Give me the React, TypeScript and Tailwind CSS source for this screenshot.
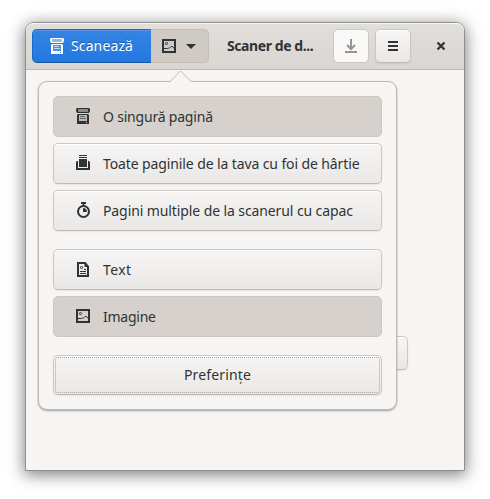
import React from "react";

type IconProps = { className?: string };

function PageIcon({ className = "" }: IconProps) {
  return (
    <svg className={`size-4 shrink-0 ${className}`} viewBox="0 0 16 16" fill="currentColor">
      <path fillRule="evenodd" d="M2 0h12l1 1v2l-1 2H2L1 3V1zM3 1v2l1 1h8l1-1V1z" />
      <path d="M3 1h10v2l-1 1H4L3 3z" opacity=".45" />
      <path fillRule="evenodd" d="M3 6h10l1 1v9H2V7zM4 7v6h8V7zM11 14v1h1v-1z" />
      <path d="M5 8h5v1H5zM5 10h6v1H5z" opacity=".65" />
      <path d="M4 7h8v6H4z" opacity=".15" />
    </svg>
  );
}

function TrayIcon() {
  return (
    <svg className="size-4 shrink-0" viewBox="0 0 16 16" fill="currentColor">
      <path d="M4 0h8v1H4zM4 2h8v1H4zM4 4h8v8H4z" />
      <path d="M2 6h1v7h10V6h1l1 1v8H1V7z" />
    </svg>
  );
}

function TimerIcon() {
  return (
    <svg className="size-4 shrink-0" viewBox="0 0 16 16" fill="none" stroke="currentColor">
      <circle cx="8.500" cy="9.500" r="5.500" strokeWidth="2" />
      <path d="M6 1h5M8.500 1v3" strokeWidth="1.800" />
      <path d="M8 6v4h4c0-2.500-1.500-4-4-4z" fill="currentColor" stroke="none" />
    </svg>
  );
}

function TextIcon() {
  return (
    <svg className="size-4 shrink-0" viewBox="0 0 16 16" fill="none" stroke="currentColor">
      <path d="M3 2h7l3 3.500V15H3z" strokeWidth="2" />
      <path d="M9.500 1.500V6H14L10 1z" fill="currentColor" stroke="none" />
      <circle cx="6.500" cy="6.500" r="1.100" />
      <path d="M9 8.500h2M5 10.500h6M5 12.500h6" />
    </svg>
  );
}

function ImageIcon() {
  return (
    <svg className="size-4 shrink-0" viewBox="0 0 16 16" fill="none" stroke="currentColor">
      <path d="M2 2h12v12H2z" strokeWidth="2" />
      <circle cx="5.500" cy="5.500" r="1.100" />
      <path d="M3 10.500h3.500l.8-.7.7.7 2-2h1.500L13 10.500" />
    </svg>
  );
}

const raised =
  "border border-[#cdc7c2] border-b-[#bfb8b1] bg-linear-to-b from-[#f6f5f3] to-[#eae8e6] shadow-[inset_0_1px_#fff,0_1px_2px_rgba(0,0,0,0.07)]";
const pressed = "border border-[#cdc7c2] bg-[#d6d1cc]";

function MenuButton({
  icon,
  label,
  active = false,
  spacing,
}: {
  icon: React.ReactNode;
  label: string;
  active?: boolean;
  spacing: string;
}) {
  return (
    <button className={`flex h-[41px] w-full items-center gap-3 rounded-[5px] pl-[21px] ${active ? pressed : raised}`}>
      <span className="-mt-px block size-4 shrink-0">{icon}</span>
      <span className={`whitespace-nowrap ${spacing}`}>{label}</span>
    </button>
  );
}

export default function App() {
  return (
    <div className="h-[499px] w-[490px] overflow-hidden bg-white pt-[22px] pl-[25px] font-['Noto_Sans','Open_Sans',sans-serif] text-[14px] leading-5 text-[#2e3436]">
      <div className="relative flex h-[449px] w-[440px] flex-col rounded-t-[9px] border border-[#8f8f8e] bg-[#f6f5f4] shadow-[0_3px_16px_1px_rgba(0,0,0,0.5)]">
        <header className="flex h-[47px] shrink-0 items-center rounded-t-[8px] border-b border-[#bfb8b1] bg-linear-to-b from-[#e1dedb] to-[#dad6d2] pl-1.5 shadow-[inset_0_1px_#f8f7f7]">
          <button className="flex h-[34px] w-[119px] items-center rounded-l-[5px] border border-r-0 border-[#1b6acb] border-b-[#15539e] bg-linear-to-b from-[#3584e4] to-[#2278e1] pl-4 text-white shadow-[inset_0_1px_#5396e7]">
            <PageIcon />
            <span className="ml-1.5 tracking-[0.12px] [text-shadow:0_-1px_rgba(0,0,0,0.3)]">Scanează</span>
          </button>
          <button className="flex h-[34px] w-[58px] items-center rounded-r-[5px] border border-l-0 border-[#c4beb7] bg-[#cfcac4] pl-2.5">
            <ImageIcon />
            <svg className="ml-[9px] h-[5px] w-[10px]" viewBox="0 0 10 5">
              <path d="M0 0h10L5 5z" fill="currentColor" />
            </svg>
          </button>
          <h1 className="ml-[18px] w-[106px] whitespace-nowrap text-[14px] font-bold tracking-[-0.42px]">Scaner de d...</h1>
          <button className="flex h-[34px] w-[36px] items-center justify-center rounded-[5px] border border-[#cdc7c2] bg-[#faf9f8] text-[#929595]">
            <svg className="size-4" viewBox="0 0 16 16" fill="none" stroke="currentColor" strokeWidth="2">
              <path d="M8 1v10M4 7l4 4 4-4M2 14h12" />
            </svg>
          </button>
          <button className={`ml-1.5 flex h-[34px] w-[36px] items-center justify-center rounded-[5px] ${raised}`}>
            <svg className="size-4" viewBox="0 0 16 16" fill="currentColor">
              <path d="M3 3h10v2H3zM3 7h10v2H3zM3 11h10v2H3z" />
            </svg>
          </button>
          <button className="ml-[22px] flex size-4 items-center justify-center">
            <svg className="size-4" viewBox="0 0 16 16" fill="none" stroke="currentColor" strokeWidth="2.300">
              <path d="M4.500 4.500l7 7M11.500 4.500l-7 7" />
            </svg>
          </button>
        </header>

        <main className="flex flex-1 justify-end pt-[266px] pr-[56px]">
          <div className={`h-[34px] w-[90px] rounded-[5px] ${raised}`} />
        </main>

        <div className="absolute top-[58px] left-3 flex h-[329px] w-[359px] flex-col rounded-[9px] border border-[#bdbbb9] bg-[#f6f5f4] px-[14px] pt-[14px] shadow-[0_1px_2px_rgba(0,0,0,0.35)]">
          <svg className="absolute -top-3 left-[130px] h-[13px] w-6" viewBox="0 0 24 13">
            <path d="M0 13L11.500 1 23 13z" fill="#f6f5f4" />
            <path d="M0 11.500H1L11.500 1 22 11.500h2" fill="none" stroke="#bdbbb9" />
          </svg>
          <div className="flex flex-col gap-1.5">
            <MenuButton active icon={<PageIcon />} label="O singură pagină" spacing="tracking-[-0.2px]" />
            <MenuButton icon={<TrayIcon />} label="Toate paginile de la tava cu foi de hârtie" spacing="tracking-[-0.11px]" />
            <MenuButton icon={<TimerIcon />} label="Pagini multiple de la scanerul cu capac" spacing="tracking-[-0.1px]" />
          </div>
          <div className="mt-[18px] flex flex-col gap-1.5">
            <MenuButton icon={<TextIcon />} label="Text" spacing="tracking-[0.4px]" />
            <MenuButton active icon={<ImageIcon />} label="Imagine" spacing="tracking-[-0.25px]" />
          </div>
          <button className={`mt-[18px] h-10 w-full rounded-[5px] p-px ${raised}`}>
            <span className="flex h-full items-center justify-center rounded-[3px] border border-dotted border-[#a4a6a4] tracking-[0.15px]">
              Preferințe
            </span>
          </button>
        </div>
      </div>
    </div>
  );
}
